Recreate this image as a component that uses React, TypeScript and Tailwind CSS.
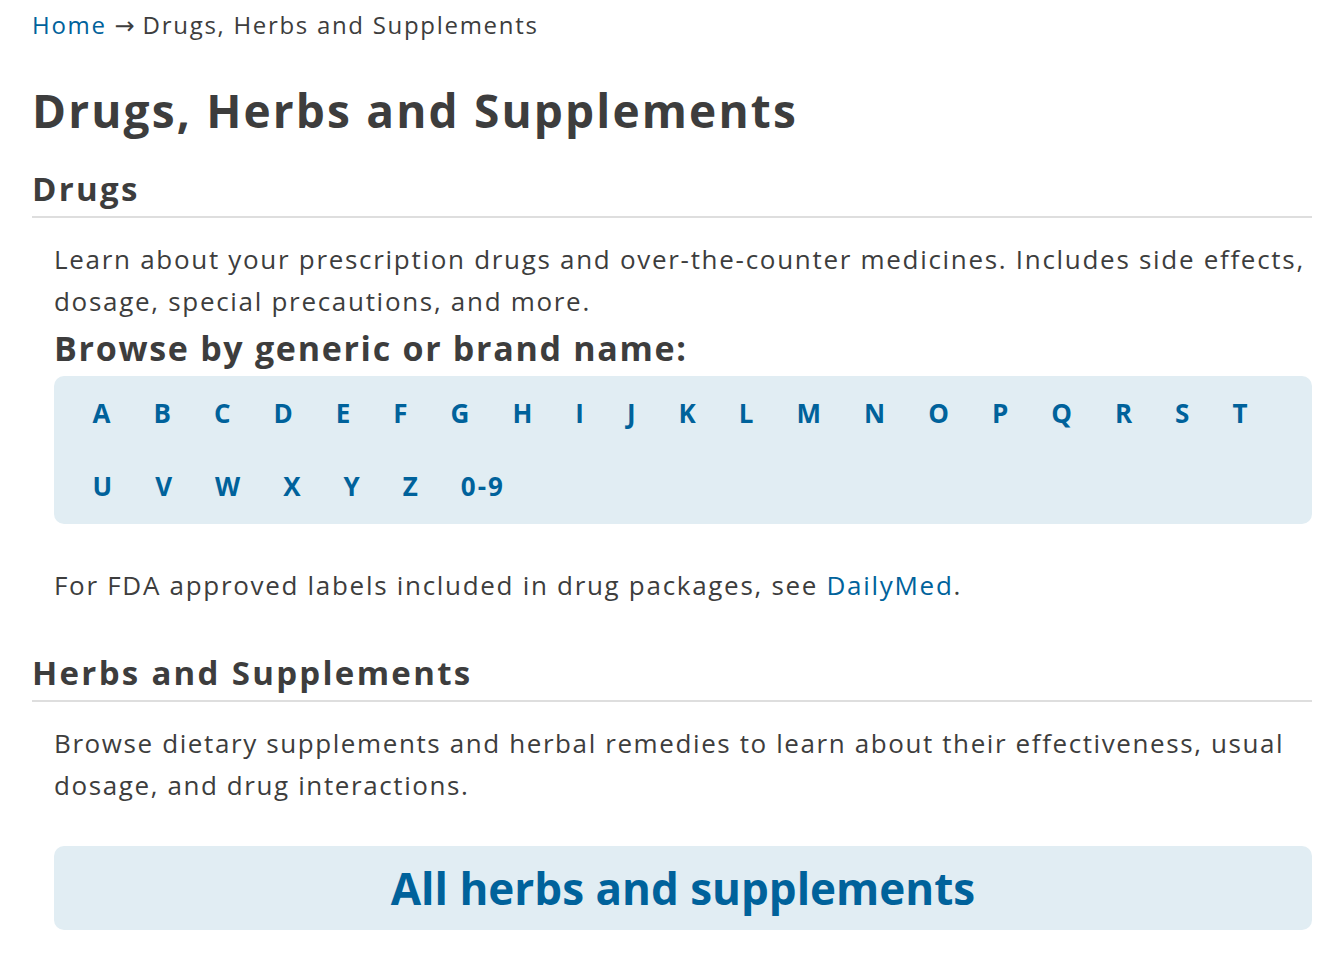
const letters = 'ABCDEFGHIJKLMNOPQRST'.split('');
const letters2 = ['U', 'V', 'W', 'X', 'Y', 'Z', '0-9'];

const LetterLink = ({ label }: { label: string }) => (
  <a
    href="#"
    className="inline-block px-[20.5px] text-[26px] font-bold leading-[73px] tracking-[2px] text-[#00629b]"
  >
    {label}
  </a>
);

export default function App() {
  return (
    <div className="min-h-screen bg-white pl-8 pr-[30px] font-['Open_Sans',sans-serif] text-[#3d3d3d]">
      <nav className="pt-[6px] text-[24px] leading-[38px] tracking-[1.7px]">
        <a href="#" className="text-[#00629b]">
          Home
        </a>{' '}
        <span className="font-['DejaVu_Sans',sans-serif] text-[24px] tracking-normal">→</span> Drugs, Herbs and
        Supplements
      </nav>

      <h1 className="mt-[37px] text-[46px] font-bold leading-[56px] tracking-[2.15px]">
        Drugs, Herbs and Supplements
      </h1>

      <section>
        <h2 className="mt-[31px] border-b-2 border-[#dedede] pb-[7px] text-[33px] font-bold leading-[40px] tracking-[2.3px]">
          Drugs
        </h2>
        <div className="pl-[22px]">
          <p className="mt-[20px] text-[26px] leading-[42px] tracking-[1.7px]">
            Learn about your prescription drugs and over-the-counter medicines. Includes side effects, dosage,
            special precautions, and more.
          </p>
          <h3 className="mt-[2px] text-[34px] font-bold leading-[48px] tracking-[1.7px]">
            Browse by generic or brand name:
          </h3>
          <div className="mt-[4px] rounded-[10px] bg-[#e1edf3] px-[18px] py-[1px]">
            <div className="flex flex-wrap">
              {letters.map((l) => (
                <LetterLink key={l} label={l} />
              ))}
            </div>
            <div className="flex flex-wrap">
              {letters2.map((l) => (
                <LetterLink key={l} label={l} />
              ))}
            </div>
          </div>
          <p className="mt-[40px] text-[26px] leading-[42px] tracking-[1.7px]">
            For FDA approved labels included in drug packages, see{' '}
            <a href="#" className="text-[#00629b]">
              DailyMed
            </a>
            .
          </p>
        </div>
      </section>

      <section>
        <h2 className="mt-[47px] border-b-2 border-[#dedede] pb-[7px] text-[33px] font-bold leading-[40px] tracking-[2.3px]">
          Herbs and Supplements
        </h2>
        <div className="pl-[22px]">
          <p className="mt-[20px] text-[26px] leading-[42px] tracking-[1.6px]">
            Browse dietary supplements and herbal remedies to learn about their effectiveness, usual dosage, and
            drug interactions.
          </p>
          <a
            href="#"
            className="mt-[40px] block rounded-[10px] bg-[#e1edf3] py-[14px] text-center text-[44px] font-bold leading-[56px] text-[#00629b]"
          >
            All herbs and supplements
          </a>
        </div>
      </section>
    </div>
  );
}
